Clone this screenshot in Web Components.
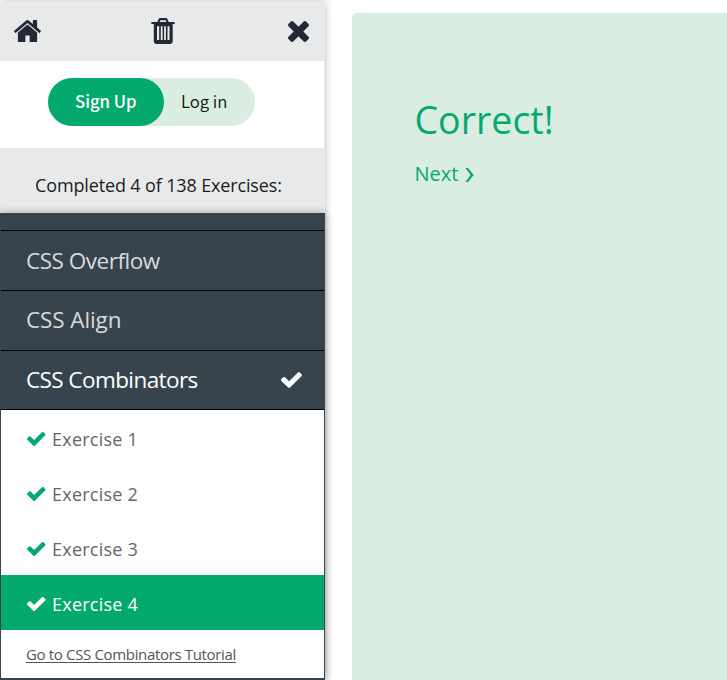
<!DOCTYPE html>
<html lang="en">
<head>
<meta charset="utf-8">
<title>CSS Exercises</title>
<style>
html,body{margin:0;height:100%;overflow:hidden;background:#fff;font-family:"Open Sans","Noto Sans",sans-serif}
</style>
</head>
<body>
<exercise-app></exercise-app>
<script>
const ICONS = {
  check: ['121 334 1550 1188', '<path d="M1671 566q0 40-28 68l-724 724-136 136q-28 28-68 28t-68-28l-136-136-362-362q-28-28-28-68t28-68l136-136q28-28 68-28t68 28l294 295 656-657q28-28 68-28t68 28l136 136q28 28 28 68z"/>'],
  times: ['302 366 1188 1188', '<path d="M1490 1322q0 40-28 68l-136 136q-28 28-68 28t-68-28l-294-294-294 294q-28 28-68 28t-68-28l-136-136q-28-28-28-68t28-68l294-294-294-294q-28-28-28-68t28-68l136-136q28-28 68-28t68 28l294 294 294-294q28-28 68-28t68 28l136 136q28 28 28 68t-28 68l-294 294 294 294q28 28 28 68z"/>'],
  home: ['88 253 1616 1283', '<path d="M1472 992v480q0 26-19 45t-45 19h-384v-384h-256v384h-384q-26 0-45-19t-19-45v-480q0-1 .5-3t.5-3l575-474 575 474q1 2 1 6zm223-69l-62 74q-8 9-21 11h-3q-13 0-21-7l-692-577-692 577q-12 8-24 7-13-2-21-11l-62-74q-8-10-7-23.5t11-21.5l719-599q32-26 76-26t76 26l244 204v-195q0-14 9-23t23-9h192q14 0 23 9t9 23v408l219 182q10 8 11 21.5t-7 23.5z"/>'],
  trash: ['0 0 24 26', '<path fill-rule="evenodd" d="M.8 4H6.300L7.500 1.200Q8 0 9.300 0H14.700Q16 0 16.500 1.200L17.700 4H23.200Q23.700 4 23.700 4.600V5.400Q23.700 6 23.200 6H21.700V23Q21.700 26 18.700 26H5.800Q2.800 26 2.800 23V6H.8Q.3 6 .3 5.400V4.600Q.3 4 .8 4ZM8.600 4H15.400L14.700 2.200H9.300ZM6 8.300V22H8.200V8.300ZM9.800 8.300V22H11.600V8.300ZM13.100 8.300V22H14.900V8.300ZM16.500 8.300V22H18.500V8.300Z"/>'],
  next: ['0 0 9 14', '<path d="M.5 0H3L8.700 7 3 14H.5L5.600 7Z"/>']
};
const define = (name, html) => customElements.define(name, class extends HTMLElement {
  constructor() { super(); this.attachShadow({mode: 'open'}).innerHTML = html; }
});
customElements.define('fa-icon', class extends HTMLElement {
  connectedCallback() {
    const [box, path] = ICONS[this.getAttribute('name')];
    if (!this.shadowRoot) this.attachShadow({mode: 'open'});
    this.shadowRoot.innerHTML = `<style>:host{display:block;flex:none}svg{display:block;width:100%;height:100%;fill:currentColor}</style><svg viewBox="${box}" preserveAspectRatio="none">${path}</svg>`;
  }
});
define('tool-bar', `<style>
:host{display:flex;justify-content:space-between;box-sizing:border-box;height:59px;padding:16px 16.500px 0 14px;background:#e7e9eb;color:#242734}
.home{width:27px;height:22px;margin-top:1.500px}.trash{width:24px;height:26px;margin-right:3px}.times{width:21px;height:21px;margin-top:3px}
</style><fa-icon class="home" name="home"></fa-icon><fa-icon class="trash" name="trash"></fa-icon><fa-icon class="times" name="times"></fa-icon>`);
define('account-switch', `<style>
:host{display:block;box-sizing:border-box;height:87px;padding:17px 0 0 48px;background:#fff}
.pill{display:flex;width:207px;height:48px;border-radius:24px;background:#d9eee1;font:350 16.700px/46px "Noto Sans CJK SC",sans-serif;color:#111}
.up{box-sizing:border-box;width:116px;padding-left:27px;border-radius:24px;background:#04aa6d;color:#fff;font-weight:500}
.in{padding-left:17px}
</style><div class="pill"><div class="up">Sign Up</div><div class="in">Log in</div></div>`);
define('progress-text', `<style>
:host{display:block;box-sizing:border-box;height:65px;padding:22px 0 0 35px;background:#e7e9eb;color:#1c1c1c;font-size:18px;line-height:30px;letter-spacing:-.14px;white-space:nowrap}
</style><slot></slot>`);
define('topic-row', `<style>
:host{display:flex;align-items:center;justify-content:space-between;box-sizing:border-box;height:60px;margin:0 1px;padding:0 22px 0 25px;border-top:1px solid #000;color:#d8dadb;font-size:22.500px;line-height:34px;letter-spacing:-.48px;white-space:nowrap}
:host([open]){color:#fff;border-bottom:1px solid #000;letter-spacing:-.58px}
fa-icon{display:none;width:21px;height:16px}
:host([open]) fa-icon{display:block}
</style><span><slot></slot></span><fa-icon name="check"></fa-icon>`);
define('exercise-row', `<style>
:host{display:flex;align-items:center;height:55px;padding-left:26px;gap:6.500px;background:#fff;color:#666;font-size:18px;letter-spacing:.23px;line-height:30px;white-space:nowrap}
fa-icon{width:18.500px;height:14px;color:#04aa6d;margin-top:3px}
span{margin-top:3px}
:host([active]){background:#04aa6d;color:#fff}
:host([active]) fa-icon{color:#fff}
</style><fa-icon name="check"></fa-icon><span><slot></slot></span>`);
define('tutorial-link', `<style>
:host{display:block;box-sizing:border-box;height:48px;padding:12px 0 0 25px;background:#fff;color:#555;font-size:15px;line-height:24px;letter-spacing:-.34px;white-space:nowrap}
span{text-decoration:underline;text-underline-offset:2px;text-decoration-thickness:1px}
</style><span><slot></slot></span>`);
define('side-menu', `<style>
:host{display:flex;flex-direction:column;width:325px;height:678px;box-shadow:0 0 8px rgba(0,0,0,.28);background:#e7e9eb}
account-switch{margin-right:1px}
.topics{flex:1;background:#38444d;padding-top:17px;box-shadow:0 0 8px rgba(0,0,0,.3)}
.align{letter-spacing:-.1px;padding-bottom:1px}
.list{margin:0 1px}
</style>
<tool-bar></tool-bar><account-switch></account-switch>
<progress-text>Completed 4 of 138 Exercises:</progress-text>
<div class="topics">
<topic-row>CSS Overflow</topic-row><topic-row class="align">CSS Align</topic-row><topic-row open>CSS Combinators</topic-row>
<div class="list"><exercise-row>Exercise 1</exercise-row><exercise-row>Exercise 2</exercise-row><exercise-row>Exercise 3</exercise-row><exercise-row active>Exercise 4</exercise-row><tutorial-link>Go to CSS Combinators Tutorial</tutorial-link></div>
</div>`);
define('result-panel', `<style>
:host{display:block;box-sizing:border-box;padding:80px 0 0 62.500px;border-radius:5px 0 0 0;background:#d9eee1;color:#04aa6d}
h1{margin:0;font-size:37.500px;font-weight:400;line-height:54px}
.next{display:flex;align-items:center;gap:7px;margin-top:12px;font-size:20px;line-height:30px}
fa-icon{width:9px;height:14px;margin-top:1px}
</style><h1>Correct!</h1><div class="next"><span>Next</span><fa-icon name="next"></fa-icon></div>`);
define('exercise-app', `<style>
:host{display:grid;grid-template-columns:325px 1fr;column-gap:27px;height:680px}
side-menu{margin-top:2px}result-panel{margin-top:13px}
</style><side-menu></side-menu><result-panel></result-panel>`);
</script>
</body>
</html>
